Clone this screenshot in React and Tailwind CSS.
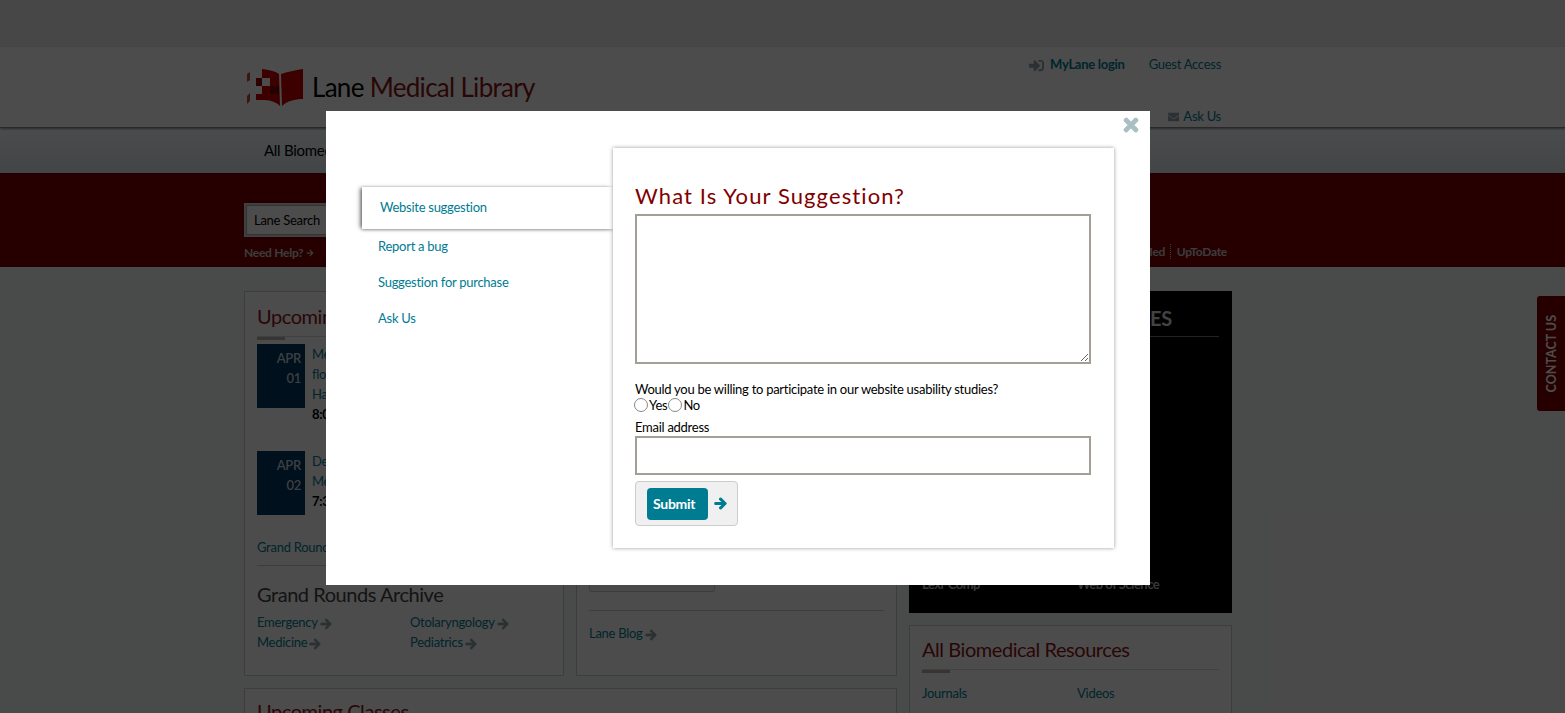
import { FaArrowRight, FaSignInAlt, FaEnvelope, FaTimes, FaClock, FaMapMarkerAlt } from "react-icons/fa";

function Logo() {
  return (
    <svg width="57" height="38" viewBox="0 0 57 38" className="shrink-0">
      <path d="M34 5 C40 3 48 1 56 0 L56 30 C48 30 40 32 35 37Z" fill="#c80000" />
      <path d="M15 0 C22 1 28 2 32 5 L33 37 C28 32 22 31 15 31Z" fill="#c80000" />
      <rect x="15" y="9" width="8" height="8" fill="#fff" />
      <rect x="23" y="17" width="9" height="8" fill="#800000" />
      <rect x="9" y="9" width="6" height="8" fill="#a00000" />
      <rect x="9" y="25" width="6" height="6" fill="#c80000" />
      <path d="M0 5 L3 3 L3 11 L0 13Z" fill="#d04040" />
      <path d="M0 27 L3 24 L3 32 L0 35Z" fill="#d04040" />
    </svg>
  );
}

function Arrow() {
  return <FaArrowRight className="inline ml-[2px] text-[12px] text-[#8fa3a8]" stroke="currentColor" strokeWidth={40} />;
}

function CardHeading({ children }) {
  return (
    <div>
      <h3 className="text-[20px] leading-[28px] tracking-[-0.45px] text-[#8c1515]">{children}</h3>
      <div className="mt-[6px] h-[4px] border-t border-[#d5d5d5]">
        <div className="h-[3px] w-[28px] bg-[#b6b1a9]" />
      </div>
    </div>
  );
}

function EventRow({ month, day, lines, time, cls }) {
  return (
    <div className={`flex gap-[7px] ${cls}`}>
      <div className="w-[48px] h-[64px] bg-[#003660] text-[#c9d3da] text-right pr-[4px] font-semibold text-[13px] leading-[20px] pt-[4px] shrink-0">
        <div>{month}</div>
        <div>{day}</div>
      </div>
      <div className="text-[13px] leading-[20px] text-[#007c92]">
        {lines.map((l) => (
          <div key={l}>{l}</div>
        ))}
        <div className="font-bold text-black">{time}</div>
      </div>
    </div>
  );
}

function Background() {
  return (
    <div className="h-screen overflow-hidden bg-[#f6f8f7]">
      <div className="h-[47px] bg-[#eaedec]" />

      {/* header */}
      <header className="h-[81px] bg-white border-b border-[#888] shadow-[0_1px_2px_rgba(0,0,0,0.4)] relative">
        <div className="ml-[247px] w-[974px] flex justify-between pt-[11px]">
          <div className="flex items-center gap-[8px] h-[60px]">
            <Logo />
            <span className="text-[26px] tracking-[-0.7px] text-black -mt-[1px]">
              Lane <span className="text-[#8c1515]">Medical Library</span>
            </span>
          </div>
          <div className="flex flex-col items-end">
            <div className="flex items-center h-[14px] text-[13px] text-[#007c92]">
              <FaSignInAlt className="text-[#8fa3a8] text-[15px] mr-[6px]" />
              <span className="font-bold">MyLane login</span>
              <span className="ml-[24px]">Guest Access</span>
            </div>
            <div className="flex items-center mt-[37px] h-[16px] text-[13px] text-[#007c92] w-[326px] whitespace-nowrap">
              <FaClock className="text-[#8fa3a8] text-[13px]" />
              <FaMapMarkerAlt className="text-[#8fa3a8] text-[13px] ml-[143px]" />
              <FaEnvelope className="text-[#8fa3a8] text-[14px] ml-[109px] mr-[4px]" />
              <span>Ask Us</span>
            </div>
          </div>
        </div>
      </header>

      {/* nav */}
      <nav className="h-[45px] bg-gradient-to-b from-[#f6ffff] to-[#e0e8ec] pl-[264px] flex items-center text-[15px] text-black">
        All Biomedical Resources
      </nav>

      {/* search band */}
      <div className="h-[94px] bg-[#800000] pl-[244px] pt-[30px]">
        <div className="w-[988px]">
          <div className="w-[200px] h-[34px] bg-[#d8d8d8] p-[2px]">
            <div className="h-full bg-white border border-[#aaa] pl-[7px] text-[13px] leading-[28px] text-black">Lane Search</div>
          </div>
          <div className="flex justify-between mt-[7px] text-[12px] font-bold text-[#c9c9c9]">
            <span className="flex items-center">
              Need Help?
              <FaArrowRight className="text-[8px] ml-[3px]" />
            </span>
            <span className="pr-[5px] -mt-[1px]">
              PubMed <span className="border-l border-dotted border-[#c9c9c9] ml-[2px] pl-[6px]">UpToDate</span>
            </span>
          </div>
        </div>
      </div>

      {/* content */}
      <div className="ml-[244px] w-[988px] mt-[24px] grid grid-cols-[653px_323px] gap-x-[12px]">
        <div>
          <div className="grid grid-cols-[320px_321px] gap-x-[12px]">
            <section className="h-[385px] bg-white border border-[#ccc] px-[12px] pt-[10px]">
              <CardHeading>Upcoming Grand Rounds</CardHeading>
              <EventRow cls="mt-[4px]" month="APR" day="01" lines={["Medicine Grand Rounds", "flow", "Hall"]} time="8:00 am" />
              <EventRow cls="mt-[27px]" month="APR" day="02" lines={["Dermatology", "Medicine"]} time="7:30 am" />
              <div className="mt-[22px] text-[13px] leading-[20px] text-[#007c92]">Grand Rounds</div>
              <div className="mt-[8px] border-t border-[#ccc]" />
              <h3 className="mt-[14px] text-[20px] leading-[28px] tracking-[-0.45px] text-[#444]">Grand Rounds Archive</h3>
              <div className="mt-[4px] grid grid-cols-[153px_1fr] text-[13px] leading-[20px] text-[#007c92]">
                <span>Emergency<Arrow /></span>
                <span>Otolaryngology<Arrow /></span>
                <span>Medicine<Arrow /></span>
                <span>Pediatrics<Arrow /></span>
              </div>
            </section>
            <section className="h-[385px] bg-white border border-[#ccc] px-[12px] flex flex-col justify-end pb-[32px]">
              <div className="w-[126px] h-[20px] border border-[#ccc] rounded-b-[3px] bg-[#f3f3f3]" />
              <div className="mt-[18px] border-t border-[#ccc]" />
              <div className="mt-[12px] text-[13px] leading-[20px] text-[#007c92]">
                Lane Blog<Arrow />
              </div>
            </section>
          </div>
          <section className="mt-[12px] h-[100px] bg-white border border-[#ccc] px-[12px] pt-[8px]">
            <h3 className="text-[20px] leading-[28px] tracking-[-0.45px] text-[#8c1515]">Upcoming Classes</h3>
          </section>
        </div>

        <div>
          <section className="h-[322px] bg-black px-[13px] pt-[11px] flex flex-col">
            <h3 className="text-[20px] leading-[33px] font-bold text-[#ddd] text-right pr-[47px] border-b border-[#777] pb-[1px]">RESOURCES</h3>
            <div className="mt-auto mb-[19px] grid grid-cols-[155px_1fr] text-[13px] tracking-[-0.5px] font-bold text-[#bbb]">
              <span>Lexi-Comp</span>
              <span>Web of Science</span>
            </div>
          </section>
          <section className="mt-[12px] h-[200px] bg-white border border-[#ccc] px-[12px] pt-[9px]">
            <CardHeading>All Biomedical Resources</CardHeading>
            <div className="mt-[10px] grid grid-cols-[155px_1fr] text-[13px] leading-[20px] text-[#007c92]">
              <span>Journals</span>
              <span>Videos</span>
            </div>
          </section>
        </div>
      </div>
    </div>
  );
}

function Tabs() {
  const others = ["Report a bug", "Suggestion for purchase", "Ask Us"];
  return (
    <div className="w-[287px] pl-[36px] pt-[39px] shrink-0">
      <div className="h-[42px] bg-white pl-[18px] flex items-center text-[13px] text-[#007c92] shadow-[-3px_0_4px_-1px_rgba(0,0,0,0.5),0_1px_3px_rgba(0,0,0,0.3)]">
        Website suggestion
      </div>
      <ul className="pl-[16px] -mt-[1px] text-[13px] text-[#007c92]">
        {others.map((t) => (
          <li key={t} className="h-[36px] leading-[36px]">{t}</li>
        ))}
      </ul>
    </div>
  );
}

function Modal() {
  return (
    <div className="absolute left-[326px] top-[111px] w-[824px] h-[474px] bg-white flex pt-[37px]">
      <FaTimes className="absolute right-[9px] top-[4px] text-[#a9bfc4] text-[20px]" stroke="currentColor" strokeWidth={30} />
      <Tabs />
      <div className="w-[501px] h-[400px] bg-white shadow-[0_0_4px_rgba(0,0,0,0.4)] pl-[22px] pr-[23px] pt-[33px] text-[13px] text-black relative">
        <h2 className="text-[22px] leading-[30px] tracking-[1.1px] text-[#800000]">What Is Your Suggestion?</h2>
        <textarea className="block w-[456px] h-[150px] mt-[3px] border-2 border-[#a39f98] bg-white resize-y" />
        <p className="mt-[17px] leading-[16px]">Would you be willing to participate in our website usability studies?</p>
        <div className="flex items-center h-[16px] leading-[16px] -ml-[1px]">
          <span className="w-[14px] h-[14px] rounded-full border border-[#888] bg-white" />
          <span className="ml-[1px]">Yes</span>
          <span className="w-[14px] h-[14px] rounded-full border border-[#888] bg-white ml-[1px]" />
          <span className="ml-[1px]">No</span>
        </div>
        <label className="block mt-[6px] leading-[16px]">Email address</label>
        <input className="block w-[456px] h-[39px] border-2 border-[#a39f98] bg-white mt-[1px]" />
        <div className="mt-[6px] w-[103px] h-[45px] bg-[#f0f0f0] border border-[#ccc] rounded-[4px] flex items-center pl-[11px]">
          <button className="w-[61px] h-[32px] bg-[#007c92] rounded-[4px] text-white font-bold text-[14px] text-left pl-[6px]">Submit</button>
          <FaArrowRight className="ml-[6px] text-[#007c92] text-[13px]" stroke="currentColor" strokeWidth={40} />
        </div>
      </div>
    </div>
  );
}

export default function App() {
  return (
    <div className="relative font-['Lato','Noto_Sans',sans-serif] tracking-[-0.27px]">
      <Background />
      <div className="absolute right-0 top-[296px] w-[28px] h-[115px] bg-[#800000] rounded-l-[3px] flex items-center justify-center pl-[3px]">
        <span className="[writing-mode:vertical-rl] rotate-180 text-[12.5px] font-bold tracking-[0px] text-white">CONTACT US</span>
      </div>
      <div className="absolute inset-0 bg-black/70" />
      <Modal />
    </div>
  );
}
